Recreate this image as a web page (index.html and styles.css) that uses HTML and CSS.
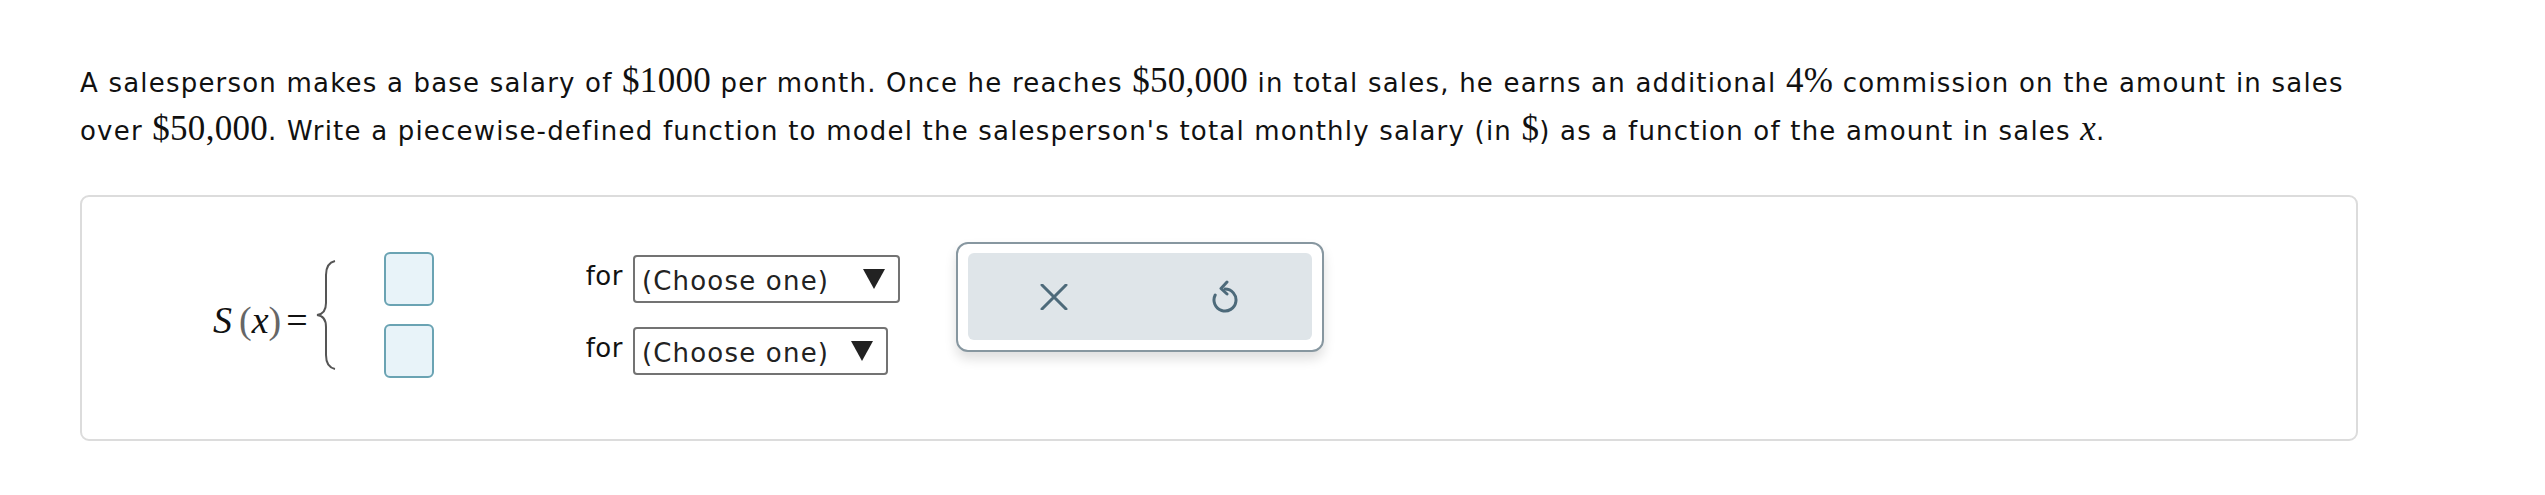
FILE: index.html
```html
<!DOCTYPE html>
<html lang="en">
<head>
<meta charset="utf-8">
<title>Piecewise function</title>
<link rel="stylesheet" href="styles.css">
</head>
<body>
<div class="page">
  <p class="question"><span class="seg">A salesperson makes a base salary of</span> <span class="m">$1000</span> <span class="seg">per month. Once he reaches</span> <span class="m">$50,000</span> <span class="seg">in total sales, he earns an additional</span> <span class="m">4%</span> <span class="seg">commission on the amount in sales</span> <span class="seg">over</span> <span class="m">$50,000</span><span class="seg">. Write a piecewise-defined function to model the salesperson's total monthly salary (in</span> <span class="m">$</span><span class="seg">) as a function of the amount in sales</span> <span class="m mi">x</span><span class="seg">.</span></p>

  <div class="card">
    <div class="piecewise">
      <div class="lhs"><span class="mi big-s">S</span><span class="paren">(</span><span class="mi">x</span><span class="paren">)</span><span class="eq">=</span></div>
      <svg class="brace" width="26" height="112" viewBox="0 0 26 112" aria-hidden="true">
        <path d="M22 2 Q13 4 13 16 L13 44 Q13 55 4 56 Q13 57 13 68 L13 96 Q13 108 22 110" fill="none" stroke="#555" stroke-width="2"/>
      </svg>
      <div class="cases">
        <span class="box"></span>
        <div class="cond"><span class="for">for</span><div class="select sel-a"><span class="sel-text">(Choose one)</span><svg class="arrow" width="22" height="20" viewBox="0 0 22 20"><polygon points="0,0 22,0 11,20" fill="#222"/></svg></div></div>
        <span class="box"></span>
        <div class="cond"><span class="for">for</span><div class="select sel-b"><span class="sel-text">(Choose one)</span><svg class="arrow" width="22" height="20" viewBox="0 0 22 20"><polygon points="0,0 22,0 11,20" fill="#222"/></svg></div></div>
      </div>
    </div>

    <div class="tools">
      <div class="tools-inner">
        <div class="tool">
          <svg width="28" height="26" viewBox="0 0 28 26" aria-hidden="true">
            <path d="M2 1 L26 25 M26 1 L2 25" stroke="#4d6a7a" stroke-width="3" stroke-linecap="round"/>
          </svg>
        </div>
        <div class="tool">
          <svg width="28" height="34" viewBox="0 0 28 34" aria-hidden="true">
            <path d="M13 9 A11 11 0 1 1 3.2 15" fill="none" stroke="#4d6a7a" stroke-width="3" stroke-linecap="round"/>
            <path d="M15 2 L9 8.5 L15 14" fill="none" stroke="#4d6a7a" stroke-width="3" stroke-linecap="round" stroke-linejoin="round"/>
          </svg>
        </div>
      </div>
    </div>
  </div>
</div>
</body>
</html>
```

FILE: styles.css
```css
html, body {
  margin: 0;
  padding: 0;
  background: #ffffff;
}

.page {
  padding: 59px 0 0 80px;
  width: 2278px;
  font-family: "DejaVu Sans", Verdana, sans-serif;
  font-size: 26px;
  color: #111;
}

.question {
  margin: 0;
  line-height: 48px;
  letter-spacing: 1.2px;
}

.m {
  font-family: "Liberation Serif", "Times New Roman", serif;
  font-size: 35px;
  line-height: 1;
  letter-spacing: 0.3px;
}

.mi {
  font-style: italic;
}

.card {
  margin-top: 40px;
  box-sizing: border-box;
  width: 2278px;
  height: 246px;
  border: 2px solid #dcdcdc;
  border-radius: 9px;
  padding: 45px 0 0 131px;
  display: flex;
  align-items: flex-start;
}

.piecewise {
  display: flex;
  align-items: center;
  margin-top: 10px;
}

.lhs {
  font-family: "Liberation Serif", "Times New Roman", serif;
  font-size: 38px;
  color: #111;
  display: flex;
  align-items: baseline;
  margin-top: 10px;
}

.big-s {
  margin-right: 7px;
}

.paren {
  color: #666;
}

.eq {
  margin-left: 5px;
}

.brace {
  display: block;
  margin-left: 5px;
}

.cases {
  display: grid;
  grid-template-columns: 50px auto;
  column-gap: 152px;
  row-gap: 18px;
  margin-left: 45px;
}

.box {
  display: block;
  box-sizing: border-box;
  width: 50px;
  height: 54px;
  border: 2px solid #6aa3b3;
  border-radius: 6px;
  background: #e8f3f9;
}

.cond {
  display: flex;
  align-items: flex-start;
}

.for {
  line-height: 48px;
  margin-right: 10px;
  color: #111;
  letter-spacing: 0.5px;
}

.select {
  box-sizing: border-box;
  margin-top: 3px;
  height: 48px;
  border: 2px solid #737373;
  border-radius: 4px;
  background: #fff;
  display: flex;
  align-items: center;
  justify-content: space-between;
  padding: 0 13px 0 7px;
}

.sel-a {
  width: 267px;
}

.sel-b {
  width: 255px;
}

.sel-text {
  line-height: 44px;
  color: #222;
  margin-top: 3px;
  letter-spacing: 1.2px;
}

.arrow {
  display: block;
}

.tools {
  margin-left: 56px;
  box-sizing: border-box;
  width: 368px;
  height: 110px;
  border: 2px solid #8797a0;
  border-radius: 12px;
  background: #fff;
  padding: 9px 10px 10px 10px;
  box-shadow: 0 7px 12px rgba(0, 0, 0, 0.13);
}

.tools-inner {
  height: 100%;
  background: #dfe5e9;
  border-radius: 6px;
  display: grid;
  grid-template-columns: 1fr 1fr;
}

.tool {
  display: flex;
  align-items: center;
  justify-content: center;
}
```
